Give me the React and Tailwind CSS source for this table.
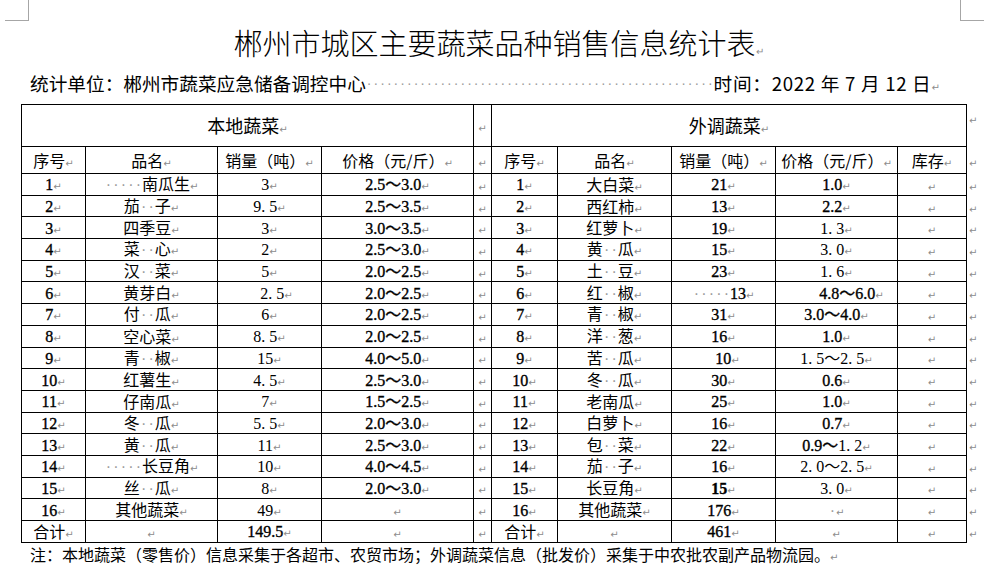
import React from 'react';

const CJK = "font-['Noto_Sans_CJK_SC',sans-serif]";
const SERIF = "font-['Liberation_Serif','Noto_Sans_CJK_SC',serif] text-[16px] [-webkit-text-stroke:0.35px_black]";
const THIN = "font-['Liberation_Serif','Noto_Sans_CJK_SC',serif] text-[16px]";

// Word paragraph mark
const R = () => (
  <span className="text-[10px] text-[#8c8c8c] font-['DejaVu_Sans',sans-serif] [-webkit-text-stroke:0]">↵</span>
);

// Word space marks
const Dots = ({ n }) =>
  Array.from({ length: n }).map((_, i) => (
    <span key={i} className="inline-block w-[7.5px] text-center text-[#9c9c9c] font-['Liberation_Sans',sans-serif]">·</span>
  ));

const s = (t) => <span className={SERIF}>{t}</span>;
const m = (t) => <span className={THIN}>{t}</span>;
const sp = (a, b) => <>{a}<Dots n={2} />{b}</>;

const LEFT = [
  ['1', <><Dots n={5} />南瓜生</>, m('3'), s('2.5～3.0')],
  ['2', sp('茄', '子'), m('9. 5'), s('2.5～3.5')],
  ['3', '四季豆', m('3'), s('3.0～3.5')],
  ['4', sp('菜', '心'), m('2'), s('2.5～3.0')],
  ['5', sp('汉', '菜'), m('5'), s('2.0～2.5')],
  ['6', '黄芽白', <span className="pl-[14px]">{m('2. 5')}</span>, s('2.0～2.5')],
  ['7', sp('付', '瓜'), m('6'), s('2.0～2.5')],
  ['8', '空心菜', m('8. 5'), s('2.0～2.5')],
  ['9', sp('青', '椒'), m('15'), s('4.0～5.0')],
  ['10', '红薯生', m('4. 5'), s('2.5～3.0')],
  ['11', '仔南瓜', m('7'), s('1.5～2.5')],
  ['12', sp('冬', '瓜'), m('5. 5'), s('2.0～3.0')],
  ['13', sp('黄', '瓜'), m('11'), s('2.5～3.0')],
  ['14', <><Dots n={5} />长豆角</>, m('10'), s('4.0～4.5')],
  ['15', sp('丝', '瓜'), m('8'), s('2.0～3.0')],
  ['16', '其他蔬菜', m('49'), null],
];

const RIGHT = [
  ['1', '大白菜', s('21'), s('1.0')],
  ['2', '西红柿', s('13'), s('2.2')],
  ['3', '红萝卜', s('19'), m('1. 3')],
  ['4', sp('黄', '瓜'), s('15'), m('3. 0')],
  ['5', sp('土', '豆'), s('23'), m('1. 6')],
  ['6', sp('红', '椒'), <><Dots n={5} />{s('13')}</>, <span className="pl-[30px]">{s('4.8～6.0')}</span>],
  ['7', sp('青', '椒'), s('31'), s('3.0～4.0')],
  ['8', sp('洋', '葱'), s('16'), s('1.0')],
  ['9', sp('苦', '瓜'), <span className="pl-[8px]">{s('10')}</span>, m('1. 5～2. 5')],
  ['10', sp('冬', '瓜'), s('30'), s('0.6')],
  ['11', '老南瓜', s('25'), s('1.0')],
  ['12', '白萝卜', s('16'), s('0.7')],
  ['13', sp('包', '菜'), s('22'), <><span className={SERIF}>0.9～</span>{m('1. 2')}</>],
  ['14', sp('茄', '子'), s('16'), m('2. 0～2. 5')],
  ['15', '长豆角', <span className="font-['Liberation_Serif',serif] text-[16px] font-bold [-webkit-text-stroke:0.3px_black]">15</span>, m('3. 0')],
  ['16', '其他蔬菜', s('176'), <Dots n={1} />],
];

const COLS = ['w-[64px]', 'w-[132px]', 'w-[104px]', 'w-[152px]', 'w-[18px]', 'w-[66px]', 'w-[114px]', 'w-[104px]', 'w-[122px]', 'w-[69px]', 'w-[20px]'];

const cell = 'border border-black text-center align-middle p-0 whitespace-nowrap leading-none text-[16px]';
const tail = 'text-left align-middle p-0 pl-[2px] leading-none';

const Row = ({ l, r, total }) => (
  <tr className="h-[21.7px]">
    <td className={cell}>{total ? '合计' : s(l[0])}<R /></td>
    <td className={cell}>{l[1]}<R /></td>
    <td className={cell}>{l[2]}<R /></td>
    <td className={cell}>{l[3]}<R /></td>
    <td className={cell}><R /></td>
    <td className={cell}>{total ? '合计' : s(r[0])}<R /></td>
    <td className={cell}>{r[1]}<R /></td>
    <td className={cell}>{r[2]}<R /></td>
    <td className={cell}>{r[3]}<R /></td>
    <td className={cell}><R /></td>
    <td className={tail}><R /></td>
  </tr>
);

const App = () => {
  return (
    <div className={`relative w-[997px] h-[567px] overflow-hidden bg-white text-black ${CJK}`}>
      {/* page corner marks */}
      <div className="absolute left-[5px] top-0 w-[24px] h-[21px] border-r border-b border-[#a6a6a6]" />
      <div className="absolute left-[960px] top-0 w-[24px] h-[21px] border-l border-b border-[#a6a6a6]" />

      <div className="pt-[25px] h-[60px] text-center text-[29px] leading-[35px] font-light">
        郴州市城区主要蔬菜品种销售信息统计表<R />
      </div>

      <div className="mt-[12px] ml-[30px] h-[22px] flex items-center text-[18.67px] leading-none whitespace-nowrap">
        <span>统计单位：郴州市蔬菜应急储备调控中心</span>
        <span className="flex">
          {Array.from({ length: 52 }).map((_, i) => (
            <span key={i} className="inline-block shrink-0 w-[6.7px] text-center text-[#9c9c9c] text-[14px] font-['Liberation_Sans',sans-serif]">·</span>
          ))}
        </span>
        <span className="tracking-[0.7px]">时间：2022 年 7 月 12 日<R /></span>
      </div>

      <table className="mt-[10px] ml-[21px] table-fixed border-collapse w-[965px]">
        <colgroup>
          {COLS.map((c, i) => <col key={i} className={c} />)}
        </colgroup>
        <tbody>
          <tr className="h-[42px]">
            <td colSpan={4} className={cell}><span className="text-[18px]">本地蔬菜</span><R /></td>
            <td className={cell}><R /></td>
            <td colSpan={5} className={cell}><span className="text-[18px]">外调蔬菜</span><R /></td>
            <td className="text-left align-top p-0 pl-[2px] pt-[4px] leading-none"><R /></td>
          </tr>
          <tr className="h-[27px]">
            <td className={cell}>序号<R /></td>
            <td className={cell}>品名<R /></td>
            <td className={cell}>销量（吨）<R /></td>
            <td className={cell}>价格（元/斤）<R /></td>
            <td className={cell}><R /></td>
            <td className={cell}>序号<R /></td>
            <td className={cell}>品名<R /></td>
            <td className={cell}>销量（吨）<R /></td>
            <td className={cell}>价格（元/斤）<R /></td>
            <td className={cell}>库存<R /></td>
            <td className={tail}><R /></td>
          </tr>
          {LEFT.map((l, i) => <Row key={i} l={l} r={RIGHT[i]} />)}
          <Row total l={[null, null, s('149.5'), null]} r={[null, null, s('461'), null]} />
        </tbody>
      </table>

      <div className="mt-[1px] ml-[30px] h-[20px] leading-[20px] text-[16px] whitespace-nowrap">
        注：本地蔬菜（零售价）信息采集于各超市、农贸市场；外调蔬菜信息（批发价）采集于中农批农副产品物流园。<R />
      </div>
    </div>
  );
};

export default App;
